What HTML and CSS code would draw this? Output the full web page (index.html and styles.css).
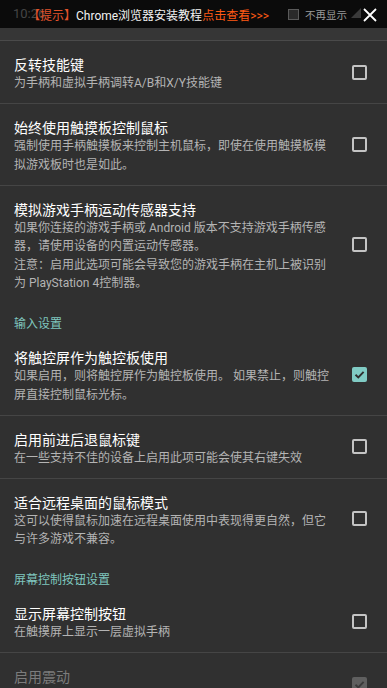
FILE: index.html
```html
<!DOCTYPE html>
<html lang="zh">
<head>
<meta charset="utf-8">
<title>设置</title>
<link rel="stylesheet" href="styles.css">
</head>
<body>
<div class="screen">
  <div class="banner">
    <span class="ghost-time">10:26</span>
    <svg class="ghost-signal" width="10" height="10" viewBox="0 0 10 10"><polygon points="10,0 10,10 0,10" fill="#3a3a3a"/></svg>
    <div class="banner-msg">
      <span class="tag">【提示】</span><span class="msg">Chrome浏览器安装教程</span><span class="link">点击查看&gt;&gt;&gt;</span>
    </div>
    <div class="banner-right">
      <span class="mini-box"></span>
      <span class="dont-show">不再显示</span>
      <svg class="close" width="14" height="14" viewBox="0 0 14 14"><path d="M1 1 L13 13 M13 1 L1 13" stroke="#ffffff" stroke-width="1.8" fill="none"/></svg>
    </div>
  </div>
  <div class="band"></div>

  <div class="list">
    <div class="pref line">
      <div class="text">
        <div class="title">反转技能键</div>
        <div class="sub">为手柄和虚拟手柄调转A/B和X/Y技能键</div>
      </div>
      <span class="box"></span>
    </div>

    <div class="pref line">
      <div class="text">
        <div class="title">始终使用触摸板控制鼠标</div>
        <div class="sub">强制使用手柄触摸板来控制主机鼠标，即使在使用触摸板模<br>拟游戏板时也是如此。</div>
      </div>
      <span class="box"></span>
    </div>

    <div class="pref">
      <div class="text">
        <div class="title">模拟游戏手柄运动传感器支持</div>
        <div class="sub">如果你连接的游戏手柄或 Android 版本不支持游戏手柄传感<br>器，请使用设备的内置运动传感器。<br>注意：启用此选项可能会导致您的游戏手柄在主机上被识别<br>为 PlayStation 4控制器。</div>
      </div>
      <span class="box"></span>
    </div>

    <div class="category">输入设置</div>

    <div class="pref line">
      <div class="text">
        <div class="title">将触控屏作为触控板使用</div>
        <div class="sub">如果启用，则将触控屏作为触控板使用。 如果禁止，则触控<br>屏直接控制鼠标光标。</div>
      </div>
      <span class="box checked"><svg width="15" height="15" viewBox="0 0 15 15"><path d="M3.5 7.8 L6.3 10.5 L11.6 4.8" stroke="#2f2f2f" stroke-width="1.9" fill="none"/></svg></span>
    </div>

    <div class="pref line">
      <div class="text">
        <div class="title">启用前进后退鼠标键</div>
        <div class="sub">在一些支持不佳的设备上启用此项可能会使其右键失效</div>
      </div>
      <span class="box"></span>
    </div>

    <div class="pref">
      <div class="text">
        <div class="title">适合远程桌面的鼠标模式</div>
        <div class="sub">这可以使得鼠标加速在远程桌面使用中表现得更自然，但它<br>与许多游戏不兼容。</div>
      </div>
      <span class="box"></span>
    </div>

    <div class="category">屏幕控制按钮设置</div>

    <div class="pref line">
      <div class="text">
        <div class="title">显示屏幕控制按钮</div>
        <div class="sub">在触摸屏上显示一层虚拟手柄</div>
      </div>
      <span class="box"></span>
    </div>

    <div class="pref disabled">
      <div class="text">
        <div class="title">启用震动</div>
        <div class="sub">使用屏幕控制按钮时震动设备以模拟游戏震动效果</div>
      </div>
      <span class="box checked"><svg width="15" height="15" viewBox="0 0 15 15"><path d="M3.5 7.8 L6.3 10.5 L11.6 4.8" stroke="#3a3a3a" stroke-width="1.9" fill="none"/></svg></span>
    </div>
  </div>
</div>
</body>
</html>
```

FILE: styles.css
```css
html, body {
  margin: 0;
  padding: 0;
  background: #303030;
}
body {
  width: 387px;
  height: 688px;
  overflow: hidden;
  font-family: Roboto, "Noto Sans CJK SC", sans-serif;
}
.screen {
  display: flex;
  flex-direction: column;
}
.banner {
  position: relative;
  height: 28px;
  background: #0b0b0b;
  display: flex;
  align-items: center;
  padding: 1px 10px 0 28px;
  box-sizing: border-box;
  font-size: 12px;
}
.ghost-time {
  position: absolute;
  left: 13px;
  top: 6px;
  font-size: 13px;
  color: #454545;
}
.ghost-signal {
  position: absolute;
  left: 351px;
  top: 8px;
}
.banner-msg {
  position: relative;
  white-space: nowrap;
}
.tag { color: #e2532b; }
.msg { color: #f2f2f2; }
.link { color: #ff5a14; }
.banner-right {
  position: relative;
  margin-left: auto;
  display: flex;
  align-items: center;
}
.mini-box {
  width: 9px;
  height: 9px;
  border: 1px solid #5a5a5a;
  background: #2a2a2a;
}
.dont-show {
  margin-left: 6px;
  font-size: 10.5px;
  color: #9a9a9a;
}
.close {
  margin-left: 16px;
}
.band {
  height: 12px;
  background: #363636;
  border-bottom: 1px solid #4a4a4a;
}
.list {
  display: flex;
  flex-direction: column;
}
.pref {
  display: flex;
  align-items: center;
  padding: 0 20px 0 14px;
}
.pref.line {
  border-bottom: 1px solid #454545;
}
.text {
  flex: 1;
  padding: 15px 0 10.5px;
}
.title {
  font-size: 14px;
  line-height: 18px;
  color: #ffffff;
}
.sub {
  font-size: 12px;
  line-height: 18.5px;
  color: #b4b4b4;
  white-space: nowrap;
}
.box {
  width: 11px;
  height: 11px;
  border: 2px solid #c4c4c4;
  border-radius: 2px;
  flex: none;
  position: relative;
}
.box.checked {
  width: 15px;
  height: 15px;
  border: none;
  background: #80cbc4;
}
.box svg {
  display: block;
}
.category {
  font-size: 12px;
  line-height: 14px;
  color: #7fc6be;
  padding: 14px 14px 3px;
}
.disabled .title { color: #7c7c7c; }
.disabled .sub { color: #6a6a6a; }
.disabled .box.checked { background: #5f5f5f; }
```
